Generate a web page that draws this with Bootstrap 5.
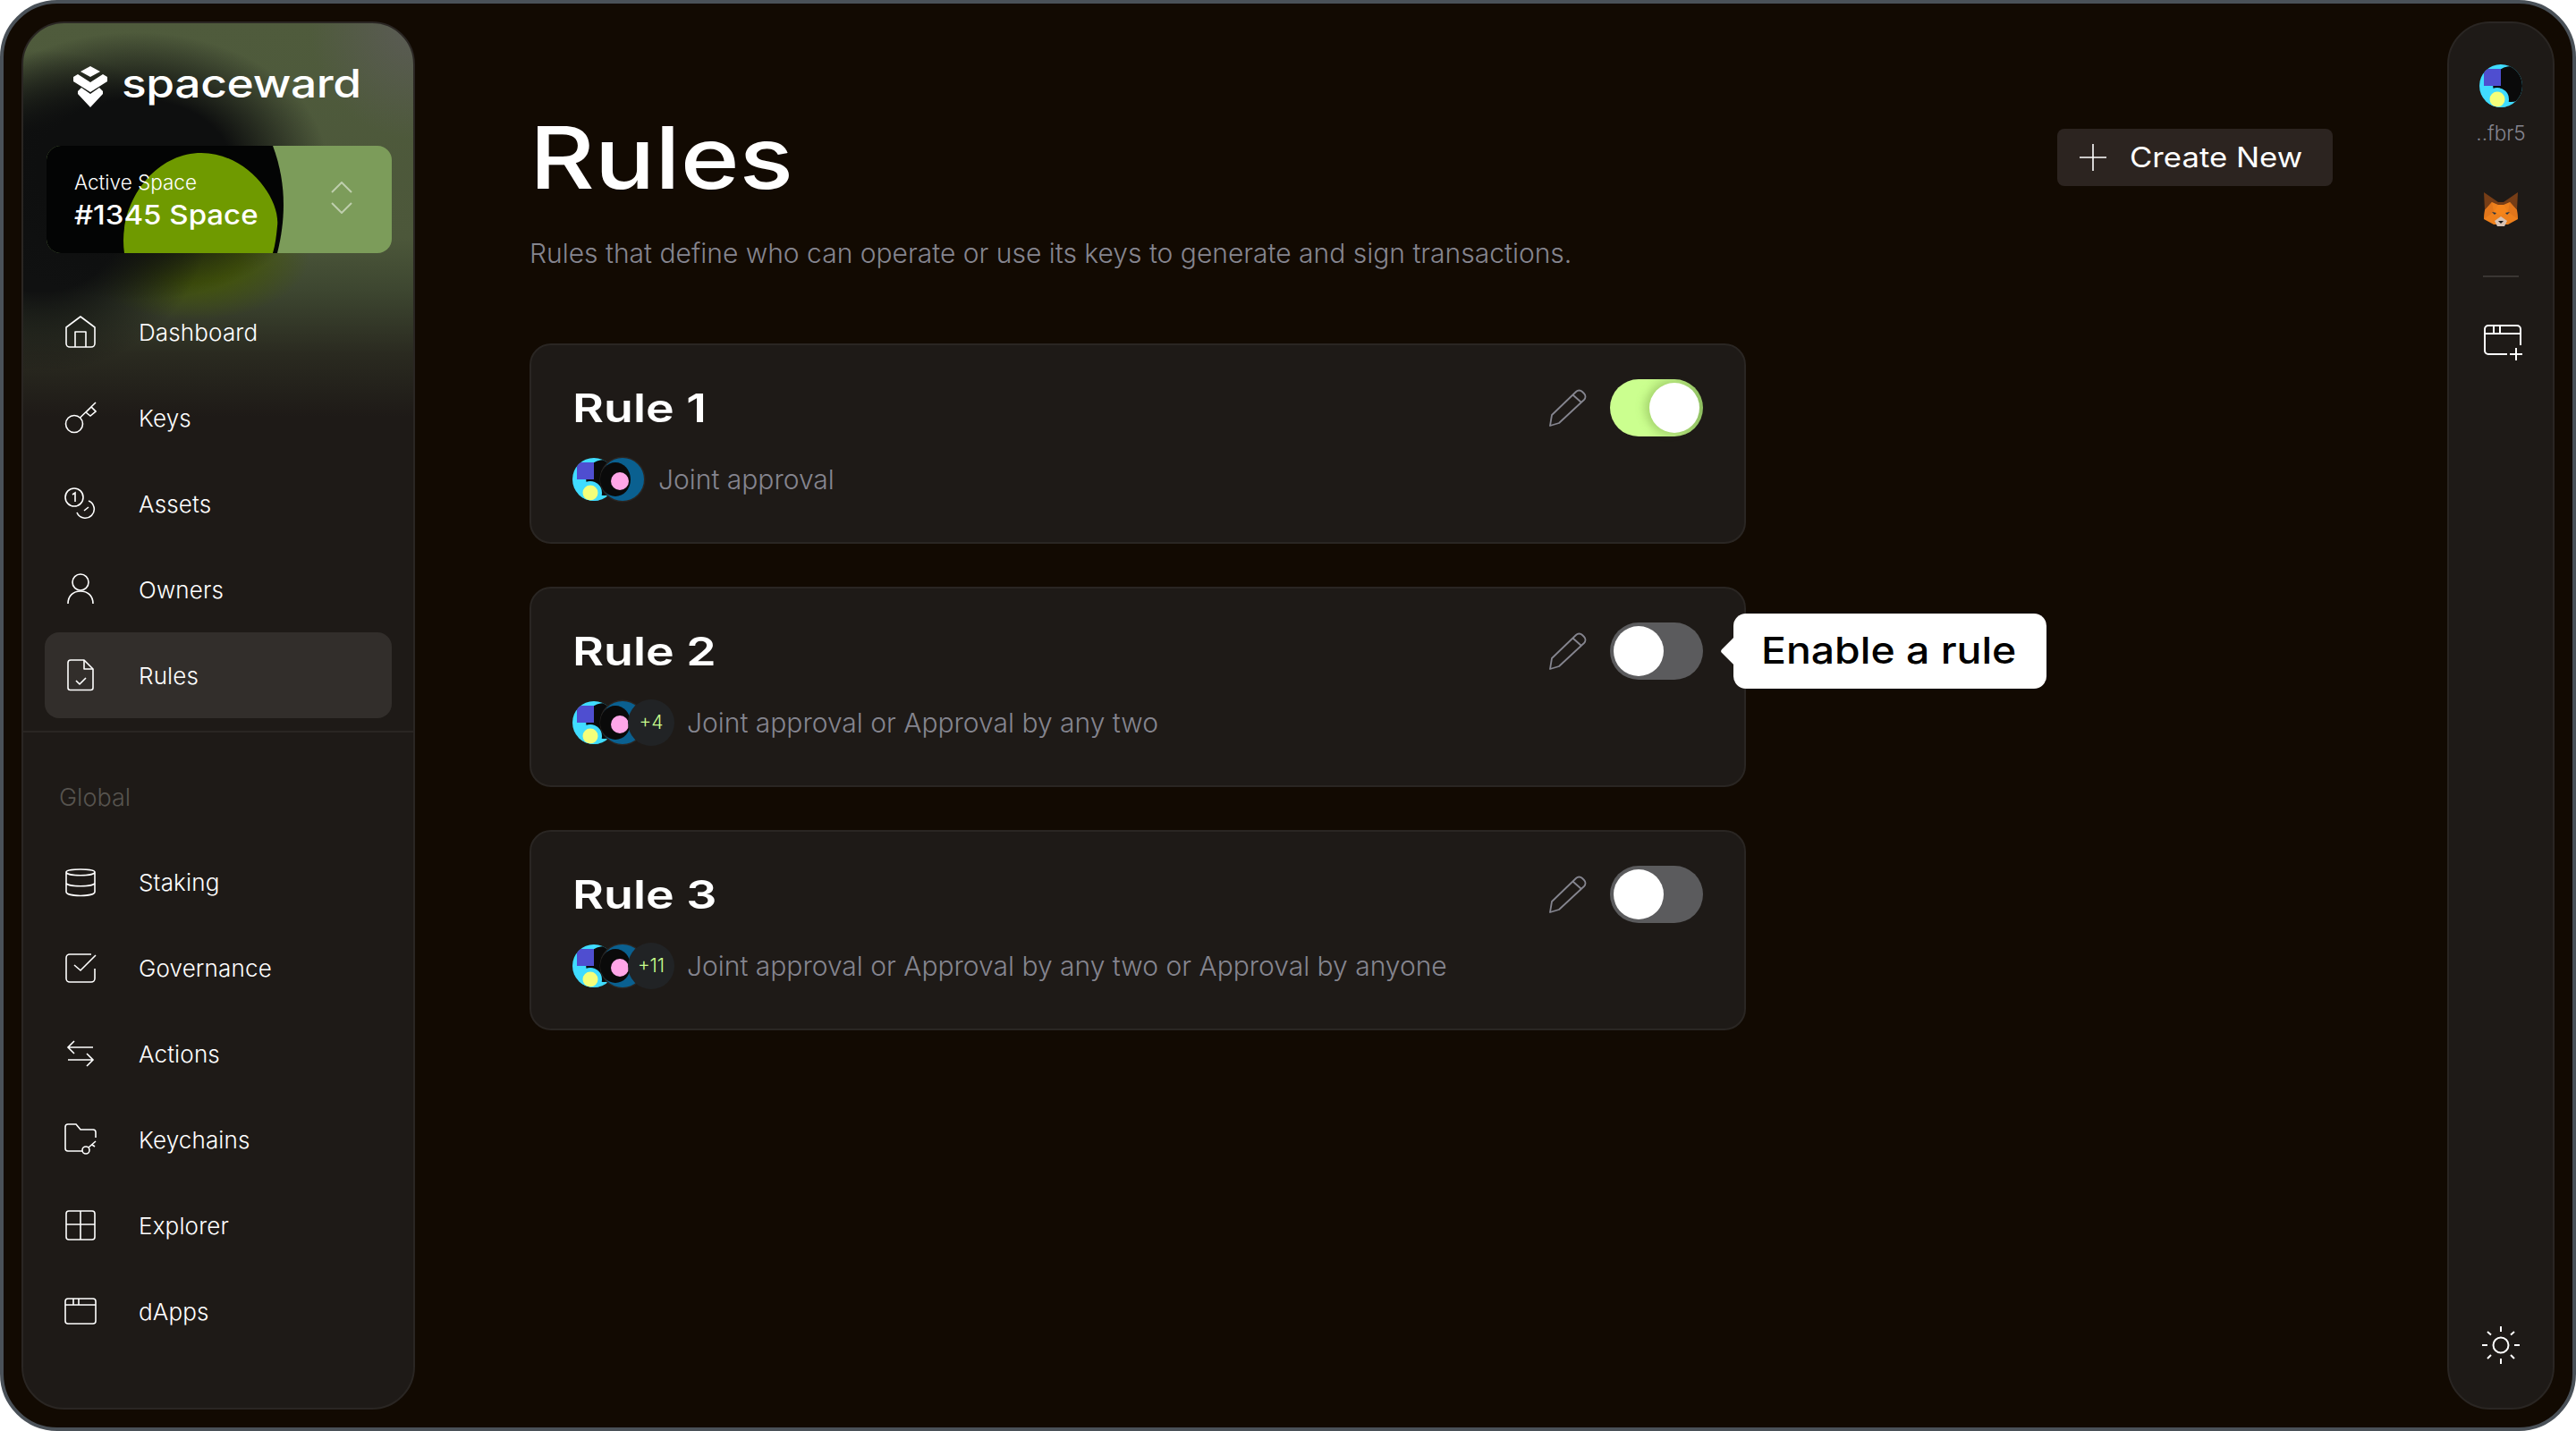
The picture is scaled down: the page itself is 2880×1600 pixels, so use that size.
<!DOCTYPE html>
<html lang="en">
<head>
<meta charset="UTF-8" />
<title>Spaceward - Rules</title>
<link href="https://cdn.jsdelivr.net/npm/bootstrap@5.3.2/dist/css/bootstrap.min.css" rel="stylesheet">
<style>
  body { background: #fff; font-family: "Inter", "Liberation Sans", sans-serif; font-weight: 300; color: #fff; overflow: hidden; }
  .frame { width: 2880px; height: 1600px; background: #120a02; border: 4px solid #4a5158; border-radius: 64px; padding: 20px; }
  .wide { display: inline-block; transform: scaleX(1.16); transform-origin: left center; white-space: nowrap; }
  .wide-title { transform: scaleX(1.17); }
  .wide-rule { transform: scaleX(1.22); }
  .wide-logo { transform: scaleX(1.17); }
  .wide-space { transform: scaleX(1.1); }
  .wide-btn { transform: scaleX(1.12); }
  .wide-hint { transform: scaleX(1.13); }

  .side { width: 440px; background-color: #1e1a17; border: 2px solid #2a2623; border-radius: 48px; overflow: hidden;
    background-image:
      radial-gradient(ellipse 215px 150px at 125px 160px, #0e0f0f 50%, rgba(14,15,15,0) 100%),
      radial-gradient(ellipse 190px 180px at 20px 210px, #101111 50%, rgba(16,17,17,0) 100%),
      radial-gradient(ellipse 130px 70px at 190px 262px, rgba(66,84,6,.9) 40%, rgba(66,84,6,0) 100%),
      radial-gradient(ellipse 120px 130px at 440px 0, #5b5b56 0, rgba(91,91,86,0) 100%),
      linear-gradient(180deg, #4f5b3c 0, #4c573a 240px, #3d4630 300px, #2a2a20 370px, rgba(30,26,23,0) 440px);
  }
  .logo-row { height: 76px; margin-top: 33px; padding-left: 56px; gap: 16px; }
  .logo-text { font-size: 44px; font-weight: 500; line-height: 1; letter-spacing: -.3px; margin-top: -8px; }
  .space-box { height: 120px; margin: 28px 24px 0 26px; position: relative; }
  .space-art { position: absolute; inset: 0; }
  .space-label { position: relative; padding: 26px 0 0 31px; }
  .space-label small { display: block; font-size: 22.5px; line-height: 30px; font-weight: 300; }
  .space-name { font-size: 30px; line-height: 42px; font-weight: 500; }
  .space-arrows { position: absolute; left: 318px; top: 40px; }

  .side-menu { padding: 40px 24px 0 24px; }
  .side-link { height: 96px; padding-left: 22px; gap: 47px; color: #fff; font-size: 26px; letter-spacing: .15px; border-radius: 16px; text-decoration: none; }
  .side-link.on { background: #322e2b; }
  .side-line { height: 2px; background: #2a2623; margin-top: 14px; }
  .side-head { color: #57544f; font-size: 27px; margin: 58px 0 0 40px; line-height: 30px; height: 30px; }
  .side-menu-low { padding-top: 31px; }

  .main-col { padding: 0 128px; min-width: 0; }
  .page-title { font-size: 96px; font-weight: 500; line-height: 116px; margin: 94px 0 0 0; }
  .new-btn { width: 308px; height: 64px; margin-top: 120px; background: #2c2420; color: #fff; border: 0; border-radius: 8px; font-size: 31px; font-weight: 400; gap: 26px; padding: 0 0 0 25px; }
  .new-btn:hover { background: #2c2420; color: #fff; }
  .page-sub { color: #85858f; font-size: 30px; line-height: 40px; margin: 29px 0 81px 0; }

  .rule-card { width: 1360px; height: 224px; background: #1e1a17; border: 2px solid #2a2623; border-radius: 24px; margin-bottom: 48px; padding: 38px 46px 0 46px; color: #fff; }
  .rule-name { font-size: 44px; font-weight: 600; line-height: 64px; }
  .rule-desc { color: #85858f; font-size: 30px; line-height: 48px; white-space: nowrap; margin-left: 14px; }
  .rule-row { margin-top: 22px; }
  .pen-ic { margin-right: 26px; }
  .sw { width: 104px; height: 64px; border-radius: 32px; background: #5b5b5d; position: relative; display: block; }
  .sw::after { content: ""; position: absolute; width: 56px; height: 56px; border-radius: 50%; background: #fff; top: 4px; left: 4px; }
  .sw.lit { background: linear-gradient(90deg, #cbff8f 40%, #b8e880 70%, #8fbf62 100%); }
  .sw.lit::after { left: 44px; box-shadow: -6px 0 10px rgba(110,150,60,.35); }
  .ava { width: 48px; height: 48px; flex: none; display: block; }
  .ava-ring { width: 52px; height: 52px; margin-left: -18px; flex: none; display: block; }
  .ava-more { width: 52px; height: 52px; margin-left: -20px; border-radius: 50%; background: #212325; color: #c9fd8e; font-size: 21px; flex: none; position: relative; }
  .hint { position: absolute; left: 1344px; top: 28px; width: 350px; height: 84px; background: #fff; border-radius: 14px; color: #000; font-size: 41px; font-weight: 500; padding-left: 31px; z-index: 2; }
  .hint::before { content: ""; position: absolute; left: -10px; top: 30px; width: 24px; height: 24px; background: #fff; border-radius: 3px; transform: rotate(45deg); }

  .rail { width: 120px; margin-left: auto; background: #1e1a17; border: 2px solid #2a2623; border-radius: 48px; padding-top: 46px; }
  .rail-name { color: #85858f; font-size: 22.5px; line-height: 30px; margin-top: 14px; }
  .rail-fox { margin-top: 51px; }
  .rail-line { width: 40px; height: 2px; background: #3a3633; margin: 55px 0 54px; }
  .rail-add { margin-left: 6px; margin-top: -1px; }
  .rail-sun { margin-bottom: 48px; }
</style>
</head>
<body>
<svg width="0" height="0" class="position-absolute">
  <defs>
    <clipPath id="round48"><circle cx="24" cy="24" r="24"/></clipPath>
    <symbol id="ava-a" viewBox="0 0 48 48">
      <g clip-path="url(#round48)">
        <rect width="48" height="48" fill="#40dcff"/>
        <circle cx="35" cy="22" r="20" fill="#0a0a0a"/>
        <rect x="5" y="5" width="19" height="19" fill="#4f4ed0"/>
        <circle cx="20" cy="39" r="13" fill="#40dcff"/>
        <circle cx="20" cy="39" r="8.5" fill="#f4ff7a"/>
      </g>
    </symbol>
    <symbol id="ava-b" viewBox="0 0 52 52">
      <circle cx="26" cy="26" r="25.5" fill="#2a2623"/>
      <circle cx="26" cy="26" r="24" fill="#0a6090"/>
      <ellipse cx="18" cy="26" rx="17" ry="19" fill="#0a0a0a"/>
      <circle cx="23" cy="28" r="10" fill="#ffa6e8"/>
    </symbol>
    <symbol id="pen" viewBox="0 0 42 42">
      <path d="M1 41l2-12L30 3c2-2 5-2 7 0l2 2c2 2 2 5 0 7L11 38z M27 7l9 8" fill="none" stroke="#85858f" stroke-width="1.8" stroke-linejoin="round"/>
    </symbol>
  </defs>
</svg>

<div class="frame d-flex">
  <aside class="side d-flex flex-column flex-shrink-0">
    <div class="logo-row d-flex align-items-center">
      <svg width="38" height="46" viewBox="0 0 38 46" fill="#fff"><path d="M19 0l11 6-11 6-11-6z"/><path d="M0 12l5-3 14 9 14-9 5 3v5L19 29 0 17z"/><path d="M5 28l4-4 10 7 10-7 4 4v3L19 46 5 31z"/></svg>
      <span class="logo-text"><span class="wide wide-logo">spaceward</span></span>
    </div>
    <div class="space-box">
      <svg class="space-art" width="386" height="120" viewBox="0 0 386 120">
        <rect width="386" height="120" rx="16" fill="#7c9c5a"/>
        <path d="M16 0H253C268 40 268 80 258 120H16A16 16 0 0 1 0 104V16A16 16 0 0 1 16 0z" fill="#030404"/>
        <path d="M87 120C79 65 120 8 173 8C225 8 262 60 258 90C257 100 256 110 253 120z" fill="#6f9a00"/>
      </svg>
      <div class="space-label">
        <small>Active Space</small>
        <div class="space-name"><span class="wide wide-space">#1345 Space</span></div>
      </div>
      <svg class="space-arrows" width="24" height="36" viewBox="0 0 24 36" fill="none" stroke="#fff" stroke-opacity=".5" stroke-width="2"><path d="M1 12L12 1l11 11M1 24l11 11 11-11"/></svg>
    </div>

    <nav class="side-menu nav flex-column">
      <a class="side-link d-flex align-items-center" href="#">
        <svg width="36" height="36" viewBox="0 0 36 36" fill="none" stroke="#fff" stroke-width="1.6" stroke-linejoin="round"><path d="M18 1L34 13V31a4 4 0 0 1-4 4H6a4 4 0 0 1-4-4V13z"/><path d="M12 35V18H24V35"/></svg>
        <span>Dashboard</span>
      </a>
      <a class="side-link d-flex align-items-center" href="#">
        <svg width="36" height="36" viewBox="0 0 36 36" fill="none" stroke="#fff" stroke-width="1.6"><circle cx="11" cy="25" r="9.5"/><path d="M17.5 18L35 1M24 12l6-6 5 5-6 5z"/></svg>
        <span>Keys</span>
      </a>
      <a class="side-link d-flex align-items-center" href="#">
        <svg width="36" height="36" viewBox="0 0 36 36" fill="none" stroke="#fff" stroke-width="1.6"><circle cx="11" cy="11" r="10"/><path d="M9 8l3-2v10M27 15A10 10 0 1 1 14 28M22 26l5-4"/></svg>
        <span>Assets</span>
      </a>
      <a class="side-link d-flex align-items-center" href="#">
        <svg width="36" height="36" viewBox="0 0 36 36" fill="none" stroke="#fff" stroke-width="1.6"><circle cx="18" cy="10" r="9"/><path d="M4 34C4 25 10 20 18 20S32 25 32 34"/></svg>
        <span>Owners</span>
      </a>
      <a class="side-link on d-flex align-items-center" href="#">
        <svg width="36" height="36" viewBox="0 0 36 36" fill="none" stroke="#fff" stroke-width="1.6" stroke-linejoin="round"><path d="M7 1H22L32 11V32a2.500 2.500 0 0 1-2.500 2.500H6.500a2.500 2.500 0 0 1-2.500-2.500V4A3 3 0 0 1 7 1z"/><path d="M22 1V11H32M13 24l4 4 7-7"/></svg>
        <span>Rules</span>
      </a>
    </nav>
    <div class="side-line"></div>
    <div class="side-head">Global</div>
    <nav class="side-menu side-menu-low nav flex-column">
      <a class="side-link d-flex align-items-center" href="#">
        <svg width="36" height="36" viewBox="0 0 36 36" fill="none" stroke="#fff" stroke-width="1.6"><path d="M2 7C2 3 34 3 34 7V29C34 35 2 35 2 29zM2 7C2 12 34 12 34 7M2 19C2 24 34 24 34 19"/></svg>
        <span>Staking</span>
      </a>
      <a class="side-link d-flex align-items-center" href="#">
        <svg width="36" height="36" viewBox="0 0 36 36" fill="none" stroke="#fff" stroke-width="1.6"><path d="M30 3H6A4 4 0 0 0 2 7V30a4 4 0 0 0 4 4H30a4 4 0 0 0 4-4V19M11 15l7 6L35 4"/></svg>
        <span>Governance</span>
      </a>
      <a class="side-link d-flex align-items-center" href="#">
        <svg width="36" height="36" viewBox="0 0 36 36" fill="none" stroke="#fff" stroke-width="1.6"><path d="M32 11H4M11 4l-7 7 7 7M4 25H32M25 18l7 7-7 7"/></svg>
        <span>Actions</span>
      </a>
      <a class="side-link d-flex align-items-center" href="#">
        <svg width="36" height="36" viewBox="0 0 36 36" fill="none" stroke="#fff" stroke-width="1.6"><path d="M20 31H4a3 3 0 0 1-3-3V4a3 3 0 0 1 3-3H13l5 6H32a3 3 0 0 1 3 3v6"/><circle cx="24" cy="30" r="4"/><path d="M27 27l8-7M31 24l3 2"/></svg>
        <span>Keychains</span>
      </a>
      <a class="side-link d-flex align-items-center" href="#">
        <svg width="36" height="36" viewBox="0 0 36 36" fill="none" stroke="#fff" stroke-width="1.6"><rect x="2" y="2" width="32" height="32" rx="3"/><path d="M18 2V34M2 17H34"/></svg>
        <span>Explorer</span>
      </a>
      <a class="side-link d-flex align-items-center" href="#">
        <svg width="36" height="36" viewBox="0 0 36 36" fill="none" stroke="#fff" stroke-width="1.6"><rect x="1" y="4" width="34" height="28" rx="3"/><path d="M1 11H35M10 4V11M16 4V11"/></svg>
        <span>dApps</span>
      </a>
    </nav>
  </aside>

  <main class="main-col flex-grow-1">
    <div class="d-flex justify-content-between align-items-start">
      <h1 class="page-title"><span class="wide wide-title">Rules</span></h1>
      <button class="new-btn btn d-flex align-items-center" type="button">
        <svg width="30" height="30" viewBox="0 0 30 30" stroke="#fff" stroke-width="1.6"><path d="M15 0V30M0 15H30"/></svg>
        <span class="wide wide-btn">Create New</span>
      </button>
    </div>
    <p class="page-sub">Rules that define who can operate or use its keys to generate and sign transactions.</p>

    <div class="rule-card card">
      <div class="d-flex align-items-center">
        <span class="rule-name"><span class="wide wide-rule">Rule 1</span></span>
        <svg class="pen-ic ms-auto" width="42" height="42"><use href="#pen"/></svg>
        <span class="sw lit"></span>
      </div>
      <div class="rule-row d-flex align-items-center">
        <svg class="ava"><use href="#ava-a"/></svg>
        <svg class="ava-ring"><use href="#ava-b"/></svg>
        <span class="rule-desc">Joint approval</span>
      </div>
    </div>

    <div class="rule-card card position-relative">
      <div class="d-flex align-items-center">
        <span class="rule-name"><span class="wide wide-rule">Rule 2</span></span>
        <svg class="pen-ic ms-auto" width="42" height="42"><use href="#pen"/></svg>
        <span class="sw"></span>
      </div>
      <div class="rule-row d-flex align-items-center">
        <svg class="ava"><use href="#ava-a"/></svg>
        <svg class="ava-ring"><use href="#ava-b"/></svg>
        <span class="ava-more d-flex align-items-center justify-content-center">+4</span>
        <span class="rule-desc">Joint approval or Approval by any two</span>
      </div>
      <div class="hint d-flex align-items-center"><span class="wide wide-hint">Enable a rule</span></div>
    </div>

    <div class="rule-card card">
      <div class="d-flex align-items-center">
        <span class="rule-name"><span class="wide wide-rule">Rule 3</span></span>
        <svg class="pen-ic ms-auto" width="42" height="42"><use href="#pen"/></svg>
        <span class="sw"></span>
      </div>
      <div class="rule-row d-flex align-items-center">
        <svg class="ava"><use href="#ava-a"/></svg>
        <svg class="ava-ring"><use href="#ava-b"/></svg>
        <span class="ava-more d-flex align-items-center justify-content-center">+11</span>
        <span class="rule-desc">Joint approval or Approval by any two or Approval by anyone</span>
      </div>
    </div>
  </main>

  <aside class="rail d-flex flex-column align-items-center flex-shrink-0">
    <svg class="ava"><use href="#ava-a"/></svg>
    <div class="rail-name">..fbr5</div>
    <svg class="rail-fox" width="40" height="38" viewBox="0 0 40 38">
      <path d="M1 0L17 11H23L39 0L38 20H2z" fill="#763d16"/>
      <path d="M2 20L10 11L17 14H23L30 11L38 20L39 30L28 36H12L1 30z" fill="#ee801c"/>
      <path d="M17 14H23L28 22L20 26L12 22z" fill="#f6851b"/>
      <path d="M2 20L10 11L12 22L1 30zM38 20L30 11L28 22L39 30z" fill="#e2761b"/>
      <path d="M13 32L20 27L27 32L24 38H16z" fill="#d7c1b3"/>
      <path d="M17 32H23L20 35z" fill="#161616"/>
      <path d="M10 22l5 1-2 2zM30 22l-5 1 2 2z" fill="#233447"/>
    </svg>
    <div class="rail-line"></div>
    <svg class="rail-add" width="44" height="40" viewBox="0 0 44 40" fill="none" stroke="#fff" stroke-width="2"><path d="M26 33H5a4 4 0 0 1-4-4V5a4 4 0 0 1 4-4H37a4 4 0 0 1 4 4V23M1 10H41M11 1V10M18 1V10M36 26V40M29 33H43"/></svg>
    <svg class="rail-sun mt-auto" width="44" height="44" viewBox="0 0 44 44" fill="none" stroke="#fff" stroke-width="2"><circle cx="22" cy="22" r="8.500"/><path d="M22 1V7M22 37V43M1 22H7M37 22H43M7 7l4 3.500M37 7l-4 3.500M7 37l4-4M37 37l-4-4"/></svg>
  </aside>
</div>
</body>
</html>
